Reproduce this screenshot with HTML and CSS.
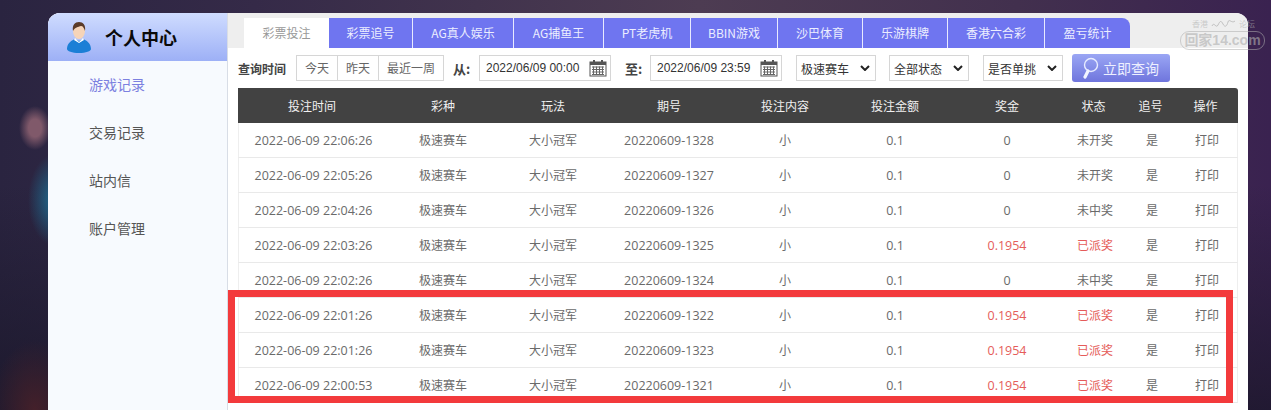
FILE: index.html
```html
<!DOCTYPE html>
<html lang="zh-CN">
<head>
<meta charset="utf-8">
<title>个人中心</title>
<link rel="stylesheet" href="styles.css">
</head>
<body>
<div class="card">
  <aside class="side">
    <div class="side-head">
      <svg class="avatar" width="26" height="32" viewBox="0 0 26 32">
        <path d="M1 28c0-6 5-9 8-10l4 2 4-2c3 1 8 4 8 10 0 2-5 4-12 4S1 30 1 28z" fill="#1b7fd6"/>
        <ellipse cx="13" cy="10" rx="6" ry="8" fill="#f6d4b8"/>
        <path d="M7 10C6 4 9 1 13 1s7 3 6 9c-1-3-2-5-4-5-3 1-6 1-8 5z" fill="#5a3a28"/>
        <path d="M9 17l4 4 4-4 1 2-5 3-5-3z" fill="#fff"/>
      </svg>
      <span class="side-title">个人中心</span>
    </div>
    <nav class="side-nav">
      <a class="nav-item nav-on">游戏记录</a>
      <a class="nav-item">交易记录</a>
      <a class="nav-item">站内信</a>
      <a class="nav-item">账户管理</a>
    </nav>
  </aside>
  <main class="main">
    <div class="tabs">
      <span class="tab tab-on t85">彩票投注</span>
      <span class="tab t84">彩票追号</span>
      <span class="tab t101">AG真人娱乐</span>
      <span class="tab t90">AG捕鱼王</span>
      <span class="tab t87">PT老虎机</span>
      <span class="tab t87">BBIN游戏</span>
      <span class="tab t85">沙巴体育</span>
      <span class="tab t85">乐游棋牌</span>
      <span class="tab t97">香港六合彩</span>
      <span class="tab t85 tab-last">盈亏统计</span>
    </div>
    <div class="filters">
      <b class="f-label">查询时间</b>
      <div class="quick"><span class="q q1">今天</span><span class="q q1">昨天</span><span class="q q2">最近一周</span></div>
      <b class="f-from">从:</b>
      <div class="date"><span>2022/06/09 00:00</span>
        <svg width="18" height="18" viewBox="0 0 18 18" class="cal"><use href="#cal"/></svg></div>
      <b class="f-to">至:</b>
      <div class="date"><span>2022/06/09 23:59</span>
        <svg width="18" height="18" viewBox="0 0 18 18" class="cal"><use href="#cal"/></svg></div>
      <div class="sel s1"><span>极速赛车</span><svg width="10" height="6" viewBox="0 0 10 6"><use href="#chev"/></svg></div>
      <div class="sel s2"><span>全部状态</span><svg width="10" height="6" viewBox="0 0 10 6"><use href="#chev"/></svg></div>
      <div class="sel s3"><span>是否单挑</span><svg width="10" height="6" viewBox="0 0 10 6"><use href="#chev"/></svg></div>
      <div class="btn">
        <svg width="20" height="24" viewBox="0 0 20 24"><circle cx="11" cy="9" r="6.500" fill="none" stroke="#e8ecff" stroke-width="1.400"/><path d="M8 15l-3 6" stroke="#f2f4ff" stroke-width="3.200" stroke-linecap="round"/></svg>
        <span>立即查询</span>
      </div>
    </div>
    <table class="grid">
      <thead>
        <tr><th class="c1">投注时间</th><th class="c2">彩种</th><th class="c2">玩法</th><th class="c4">期号</th><th class="c2">投注内容</th><th class="c2">投注金额</th><th class="c7">奖金</th><th class="c8">状态</th><th class="c9">追号</th><th class="c10">操作</th></tr>
      </thead>
      <tbody>
        <tr><td>2022-06-09 22:06:26</td><td>极速赛车</td><td>大小冠军</td><td>20220609-1328</td><td>小</td><td>0.1</td><td>0</td><td>未开奖</td><td>是</td><td>打印</td></tr>
        <tr><td>2022-06-09 22:05:26</td><td>极速赛车</td><td>大小冠军</td><td>20220609-1327</td><td>小</td><td>0.1</td><td>0</td><td>未开奖</td><td>是</td><td>打印</td></tr>
        <tr><td>2022-06-09 22:04:26</td><td>极速赛车</td><td>大小冠军</td><td>20220609-1326</td><td>小</td><td>0.1</td><td>0</td><td>未中奖</td><td>是</td><td>打印</td></tr>
        <tr><td>2022-06-09 22:03:26</td><td>极速赛车</td><td>大小冠军</td><td>20220609-1325</td><td>小</td><td>0.1</td><td class="win">0.1954</td><td class="win">已派奖</td><td>是</td><td>打印</td></tr>
        <tr><td>2022-06-09 22:02:26</td><td>极速赛车</td><td>大小冠军</td><td>20220609-1324</td><td>小</td><td>0.1</td><td>0</td><td>未中奖</td><td>是</td><td>打印</td></tr>
        <tr><td>2022-06-09 22:01:26</td><td>极速赛车</td><td>大小冠军</td><td>20220609-1322</td><td>小</td><td>0.1</td><td class="win">0.1954</td><td class="win">已派奖</td><td>是</td><td>打印</td></tr>
        <tr><td>2022-06-09 22:01:26</td><td>极速赛车</td><td>大小冠军</td><td>20220609-1323</td><td>小</td><td>0.1</td><td class="win">0.1954</td><td class="win">已派奖</td><td>是</td><td>打印</td></tr>
        <tr><td>2022-06-09 22:00:53</td><td>极速赛车</td><td>大小冠军</td><td>20220609-1321</td><td>小</td><td>0.1</td><td class="win">0.1954</td><td class="win">已派奖</td><td>是</td><td>打印</td></tr>
      </tbody>
    </table>
  </main>
</div>
<div class="mark-box" aria-hidden="true"></div>
<div class="wm">
  <div class="wm-top"><span>香港</span><svg width="26" height="12" viewBox="0 0 26 12"><path d="M1 8c2-5 4 3 6-1s3-5 5-1 4 2 5-2 4 2 7-1" fill="none" stroke="#b5b5b5" stroke-width=".8"/></svg><span>论坛</span></div>
  <div class="wm-main">回家14.com</div>
</div>
<svg class="defs" width="0" height="0">
  <symbol id="cal" viewBox="0 0 18 18">
    <rect x="1" y="3" width="16" height="14" fill="#fff" stroke="#555"/>
    <rect x="1" y="3" width="16" height="3" fill="#555"/>
    <rect x="4" y="1" width="2" height="4" fill="#555"/><rect x="12" y="1" width="2" height="4" fill="#555"/>
    <path d="M3 8h12M3 10.500h12M3 13h12M3 15.500h12M4.500 7.500v8.500M7.500 7.500v8.500M10.500 7.500v8.500M13.500 7.500v8.500" stroke="#666" stroke-width="1"/>
  </symbol>
  <symbol id="chev" viewBox="0 0 10 6"><path d="M1 1l4 4 4-4" fill="none" stroke="#222" stroke-width="2"/></symbol>
</svg>
</body>
</html>
```
FILE: styles.css
```css
* { box-sizing: border-box; }
html, body { margin: 0; height: 410px; overflow: hidden; }
body {
  position: relative;
  padding: 13px 23px 0 48px;
  font-family: "Noto Sans CJK SC", "Noto Sans", sans-serif;
  font-size: 12px;
  color: #555;
  background:
    radial-gradient(16px 22px at 35px 128px, #80596a 0, #80596a 40%, rgba(128,89,106,0) 100%),
    radial-gradient(26px 46px at 54px 200px, #1f6a8e 0, rgba(31,106,142,0) 100%),
    radial-gradient(45px 70px at 35px 410px, #44202a 0, rgba(68,32,42,0) 100%),
    linear-gradient(180deg, rgba(30,26,50,0) 0, rgba(30,26,50,0) 45%, rgba(25,22,40,.75) 100%),
    linear-gradient(90deg, #2a2440 0, #352a48 20%, #4d3c52 55%, #42304e 80%, #3a2250 100%);
}
.card {
  display: flex;
  width: 1200px;
  height: 397px;
  background: #fff;
  border-radius: 12px 12px 0 0;
  overflow: hidden;
}
.side {
  width: 180px;
  flex: none;
  background: #f7fafe;
  border-right: 1px solid #d8dde6;
}
.side-head {
  height: 48px;
  display: flex;
  align-items: center;
  padding-left: 18px;
  background: linear-gradient(180deg, #cfdcff 0, #9db0f6 100%);
}
.avatar { margin-right: 13px; }
.side-title { font-size: 18px; font-weight: 700; color: #0a0a0a; }
.side-nav { display: flex; flex-direction: column; margin-top: -1px; }
.nav-item { height: 48px; line-height: 48px; padding-left: 41px; font-size: 14px; color: #555; }
.nav-on { color: #7c80e0; }
.main { flex: 1; min-width: 0; display: flex; flex-direction: column; }
.tabs {
  display: flex;
  height: 35px;
  flex: none;
  padding: 5px 0 0 16px;
  background: #eeeeee;
}
.tab {
  height: 30px;
  line-height: 30px;
  text-align: center;
  font-size: 12px;
  background: #6f75f0;
  color: #eceeff;
  border-right: 1px solid #e8eaff;
}
.t84 { width: 84px; } .t85 { width: 85px; } .t87 { width: 87px; } .t90 { width: 90px; } .t97 { width: 97px; } .t101 { width: 101px; }
.tab-on { background: #fff; color: #999; border-right: 0; }
.tab-last { border-right: 0; border-radius: 0 8px 0 0; }
.filters {
  display: flex;
  align-items: center;
  flex: none;
  height: 40px;
  padding: 0 0 0 10px;
  font-size: 12px;
  color: #444;
}
.filters b { font-weight: 700; }
.f-label { width: 58px; }
.quick { display: flex; height: 26px; border: 1px solid #d6d6d6; }
.q { line-height: 24px; text-align: center; color: #666; font-size: 12px; }
.q1 { width: 41px; border-right: 1px solid #d6d6d6; }
.q2 { width: 64px; }
.f-from { margin-left: 9px; width: 26px; font-size: 13px; }
.f-to { margin-left: 14px; width: 25px; font-size: 13px; }
.date {
  width: 132px;
  height: 26px;
  display: flex;
  align-items: center;
  justify-content: space-between;
  padding: 0 3px 0 6px;
  border: 1px solid #d6d6d6;
  color: #333;
  font-family: "Liberation Sans", sans-serif;
  font-size: 12px;
}
.cal { flex: none; }
.sel {
  height: 26px;
  display: flex;
  align-items: center;
  justify-content: space-between;
  padding: 0 5px 0 4px;
  border: 1px solid #d6d6d6;
  color: #333;
  font-size: 12px;
}
.s1 { width: 80px; margin-left: 14px; }
.s2 { width: 80px; margin-left: 13px; }
.s3 { width: 80px; margin-left: 14px; }
.btn {
  width: 98px;
  height: 28px;
  margin-left: 9px;
  display: flex;
  align-items: center;
  gap: 3px;
  padding-left: 8px;
  border-radius: 3px;
  background: linear-gradient(180deg, #9aa6f4 0, #6f75dd 100%);
  color: #eef0ff;
  font-size: 14px;
}
.grid {
  margin: 0 0 0 10px;
  width: 1000px;
  border-collapse: separate;
  border-spacing: 0;
  table-layout: fixed;
}
.grid th {
  height: 35px;
  padding: 0;
  background: #424242;
  color: #f0f0f0;
  font-weight: 400;
  font-size: 12px;
}
.grid th:first-child { padding-right: 2px; }
.grid th:nth-child(n+8) { padding-right: 3px; }
.grid th:last-child { padding-right: 5px; border-radius: 0 3px 0 0; }
.grid td {
  height: 35px;
  padding: 0;
  text-align: center;
  font-family: "Open Sans", "Noto Sans CJK SC", sans-serif;
  font-size: 12px;
  color: #6a6a6a;
  border-bottom: 1px solid #e9e9e9;
}
.grid td:first-child,
.grid td:nth-child(4),
.grid td:nth-child(6),
.grid td:nth-child(7) { font-size: 12.5px; }
.grid td:first-child { border-left: 1px solid #eee; }
.grid td:last-child { border-right: 1px solid #eee; padding-right: 1px; }
.c1 { width: 150px; } .c2 { width: 110px; } .c4 { width: 122px; } .c7 { width: 114px; } .c8 { width: 62px; } .c9 { width: 52px; } .c10 { width: 60px; }
.grid td.win { color: #e55c5a; }
.mark-box {
  position: absolute;
  left: 228px;
  top: 290px;
  width: 1005px;
  height: 113px;
  border: 7px solid #f33a3c;
}
.wm {
  position: absolute;
  left: 1180px;
  top: 17px;
  width: 85px;
  color: rgba(175,175,175,.6);
}
.wm-top {
  display: flex;
  justify-content: space-between;
  align-items: center;
  height: 14px;
  padding: 0 10px 0 12px;
  font-size: 8px;
  line-height: 12px;
  white-space: nowrap;
}
.wm-top svg { flex: none; }
.wm-main {
  height: 19px;
  line-height: 17px;
  text-align: center;
  font-family: "Liberation Sans", "Noto Sans CJK SC", sans-serif;
  font-size: 14px;
  font-weight: 700;
  border: 1px solid rgba(175,175,175,.55);
  border-radius: 9px;
  white-space: nowrap;
}
.defs { position: absolute; }
```
